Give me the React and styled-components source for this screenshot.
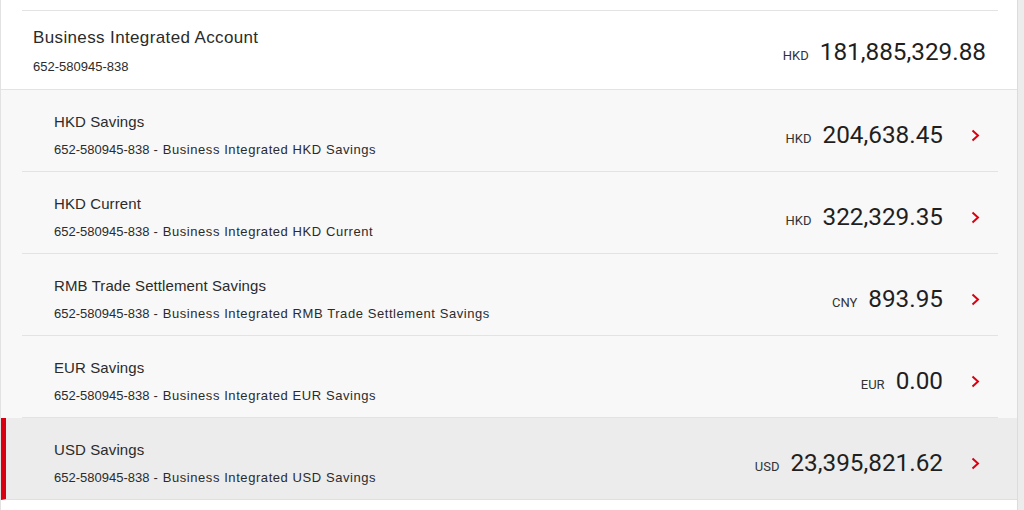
import React from "react"
import styled, { createGlobalStyle } from "styled-components"

const GlobalStyle = createGlobalStyle`
  html, body {
    margin: 0;
    padding: 0;
    background: #ececec;
  }
  body {
    font-family: "Liberation Sans", Arial, sans-serif;
    color: #333;
  }
`

const subAccounts = [
  { name: "HKD Savings", desc: "Business Integrated HKD Savings", ccy: "HKD", amount: "204,638.45" },
  { name: "HKD Current", desc: "Business Integrated HKD Current", ccy: "HKD", amount: "322,329.35" },
  {
    name: "RMB Trade Settlement Savings",
    desc: "Business Integrated RMB Trade Settlement Savings",
    ccy: "CNY",
    amount: "893.95",
  },
  { name: "EUR Savings", desc: "Business Integrated EUR Savings", ccy: "EUR", amount: "0.00" },
  { name: "USD Savings", desc: "Business Integrated USD Savings", ccy: "USD", amount: "23,395,821.62", active: true },
]

const accountNo = "652-580945-838"

const Chevron = () => (
  <ChevronBox>
    <svg width="9" height="13" viewBox="0 0 9 13">
      <polyline points="1.5,1.5 7,6.5 1.5,11.5" fill="none" stroke="#db0011" strokeWidth="2" />
    </svg>
  </ChevronBox>
)

const App = () => {
  return (
    <>
      <GlobalStyle />
      <Page>
        <Panel>
          <TopDivider />
          <Header>
            <TextBlock>
              <HeaderTitle>Business Integrated Account</HeaderTitle>
              <Sub>{accountNo}</Sub>
            </TextBlock>
            <Amount>
              <Ccy>HKD</Ccy>
              <Value>181,885,329.88</Value>
            </Amount>
          </Header>
          {subAccounts.map((acc) => (
            <Row key={acc.name} $active={acc.active}>
              <RowInner $active={acc.active}>
                <TextBlock>
                  <RowTitle>{acc.name}</RowTitle>
                  <Sub>
                    {accountNo}
                    <Desc> - {acc.desc}</Desc>
                  </Sub>
                </TextBlock>
                <Amount>
                  <Ccy>{acc.ccy}</Ccy>
                  <Value>{acc.amount}</Value>
                </Amount>
                <Chevron />
              </RowInner>
            </Row>
          ))}
        </Panel>
      </Page>
    </>
  )
}
export default App

const Page = styled.div`
  width: 1024px;
  height: 510px;
  overflow: hidden;
  background: #ececec;
`

const Panel = styled.div`
  width: 1016px;
  height: 510px;
  background: #ffffff;
  border-left: 1px solid #e2e2e2;
  border-right: 1px solid #dcdcdc;
`

const TopDivider = styled.div`
  height: 10px;
  margin: 0 19px 0 21px;
  border-bottom: 1px solid #e3e3e3;
`

const Header = styled.div`
  display: flex;
  align-items: center;
  justify-content: space-between;
  padding: 16px 31px 13px 32px;
  border-bottom: 1px solid #e3e3e3;
  background: #ffffff;
`

const TextBlock = styled.div`
  display: flex;
  flex-direction: column;
  flex: 1;
  min-width: 0;
`

const HeaderTitle = styled.div`
  font-size: 17px;
  line-height: 22px;
  letter-spacing: 0.37px;
  color: #2b2b2b;
  margin-bottom: 9px;
`

const RowTitle = styled.div`
  font-size: 15px;
  line-height: 20px;
  letter-spacing: 0.1px;
  color: #2b2b2b;
  margin-bottom: 9px;
`

const Sub = styled.div`
  font-size: 13px;
  line-height: 18px;
  color: #2b2b2b;
  white-space: pre;
`

const Desc = styled.span`
  letter-spacing: 0.57px;
`

const Amount = styled.div`
  display: flex;
  align-items: baseline;
  white-space: nowrap;
`

const Ccy = styled.span`
  font-family: Roboto, "Liberation Sans", Arial, sans-serif;
  font-size: 13px;
  color: #333;
  margin-right: 11px;
`

const Value = styled.span`
  font-family: Roboto, "Liberation Sans", Arial, sans-serif;
  font-size: 24.3px;
  line-height: 28px;
  color: #1f1f1f;
`

const Row = styled.div`
  background: ${(p) => (p.$active ? "#ececec" : "#f8f8f8")};
  border-left: ${(p) => (p.$active ? "5px solid #db0011" : "0")};
  border-bottom: ${(p) => (p.$active ? "1px solid #e0e0e0" : "0")};
`

const RowInner = styled.div`
  display: flex;
  align-items: center;
  box-sizing: border-box;
  height: ${(p) => (p.$active ? "81px" : "82px")};
  margin: ${(p) => (p.$active ? "0 19px 0 16px" : "0 19px 0 21px")};
  padding: 22px 18px 13px 32px;
  border-bottom: ${(p) => (p.$active ? "0" : "1px solid #e3e3e3")};
`

const ChevronBox = styled.div`
  display: flex;
  align-items: center;
  margin-left: 28px;
  width: 9px;
  height: 13px;
`
